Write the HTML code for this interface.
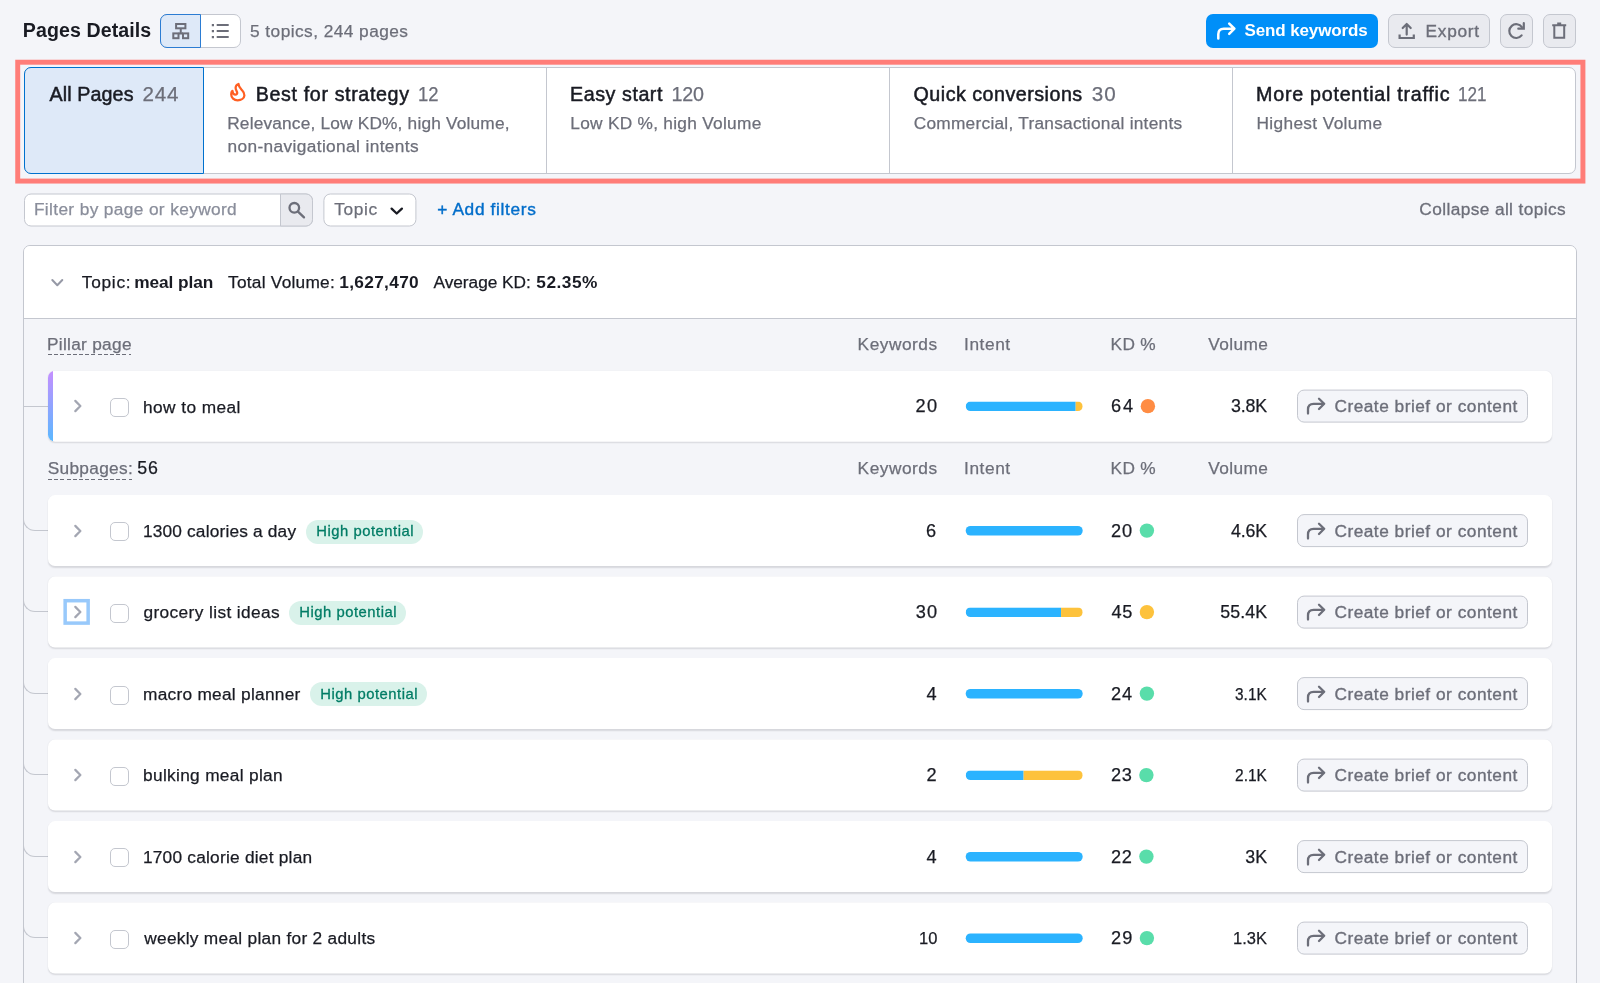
<!DOCTYPE html>
<html lang="en"><head><meta charset="utf-8"><title>Pages Details</title>
<style>
html,body{margin:0;padding:0;}
body{width:1600px;height:983px;overflow:hidden;background:#f4f5f9;font-family:"Liberation Sans", sans-serif;position:relative;}
.b{position:absolute;}
#txt{position:absolute;left:0;top:0;width:1600px;height:983px;will-change:transform;}
.t{position:absolute;white-space:pre;line-height:24px;font-family:"Liberation Sans", sans-serif;}
</style></head><body>
<div class="b" style="left:160px;top:14px;width:81px;height:34px;border:1px solid #c4c7cf;border-radius:7px;background:#fff;box-sizing:border-box;"></div>
<div class="b" style="left:160px;top:14px;width:41px;height:34px;border:1px solid #2b7cd3;border-radius:7px 0 0 7px;background:#dee9f8;box-sizing:border-box;"></div>
<svg class="b" style="left:168px;top:18px;" width="70" height="26" viewBox="168 18 70 26" fill="none" stroke-linecap="round" stroke-linejoin="round"><g stroke="#6c6e79" stroke-width="2" stroke-linecap="butt" stroke-linejoin="miter"><rect x="176.1" y="24" width="9.3" height="4.3"/><rect x="173.3" y="33.4" width="5.2" height="4.8"/><rect x="183" y="33.4" width="5.2" height="4.8"/><path d="M180.75 28.3V33.4M178.5 33.4H183"/><path d="M216.7 25.1H228.7M216.7 31.1H228.7M216.7 37.1H228.7"/><path d="M211.8 25.1H214M211.8 31.1H214M211.8 37.1H214" stroke-width="2.2"/></g></svg>
<div class="b" style="left:1206px;top:14px;width:172px;height:34px;background:#008ff8;border-radius:7px;"></div>
<svg class="b" style="left:1212px;top:18px;" width="28" height="26" viewBox="1212 18 28 26" fill="none" stroke-linecap="round" stroke-linejoin="round"><path d="M1218.3 38.4V34.2Q1218.3 28.7 1223.8 28.7H1233.8M1229.2 23.6L1234.4 28.7L1229.2 33.9" stroke="#fff" stroke-width="2.5"/></svg>
<div class="b" style="left:1388px;top:14px;width:102px;height:34px;background:#e9eaef;border:1px solid #c4c7cf;border-radius:7px;box-sizing:border-box;"></div>
<svg class="b" style="left:1394px;top:18px;" width="26" height="26" viewBox="1394 18 26 26" fill="none" stroke-linecap="round" stroke-linejoin="round"><g stroke="#6c6e79" stroke-width="2.2"><path d="M1399.6 34.4V38H1413.8V34.4" stroke-linecap="butt" stroke-linejoin="miter"/><path d="M1406.7 34.6V24.2M1402.7 28L1406.7 24L1410.7 28"/></g></svg>
<div class="b" style="left:1500px;top:14px;width:33px;height:34px;background:#e9eaef;border:1px solid #c4c7cf;border-radius:7px;box-sizing:border-box;"></div>
<svg class="b" style="left:1504px;top:18px;" width="26" height="26" viewBox="1504 18 26 26" fill="none" stroke-linecap="round" stroke-linejoin="round"><g stroke="#6c6e79" stroke-width="2.2"><path d="M1521.6 35.4A6.9 6.9 0 1 1 1521.9 27.2" /><path d="M1523.8 23.2V28.7H1518.3" stroke-linejoin="miter"/></g></svg>
<div class="b" style="left:1543px;top:14px;width:33px;height:34px;background:#e9eaef;border:1px solid #c4c7cf;border-radius:7px;box-sizing:border-box;"></div>
<svg class="b" style="left:1548px;top:18px;" width="24" height="26" viewBox="1548 18 24 26" fill="none" stroke-linecap="round" stroke-linejoin="round"><g stroke="#6c6e79" stroke-width="2" stroke-linecap="butt" stroke-linejoin="miter"><path d="M1552.2 25.3H1566.2M1557.2 23.4H1561.2"/><path d="M1554.3 25.3V37.8H1564.2V25.3"/></g></svg>
<svg class="b" style="left:12px;top:56px;" width="1578" height="132" viewBox="12 56 1578 132" fill="none" stroke-linecap="round" stroke-linejoin="round"><rect x="17.72" y="62.22" width="1565.2" height="118.85" stroke="#ff7d78" stroke-width="4.95" stroke-linejoin="miter"/></svg>
<div class="b" style="left:24px;top:67px;width:1552px;height:107px;border:1px solid #c4c7cf;border-radius:7px;background:#fff;box-sizing:border-box;"></div>
<div class="b" style="left:546px;top:68px;width:1px;height:105px;background:#c4c7cf;"></div>
<div class="b" style="left:889px;top:68px;width:1px;height:105px;background:#c4c7cf;"></div>
<div class="b" style="left:1232px;top:68px;width:1px;height:105px;background:#c4c7cf;"></div>
<div class="b" style="left:24px;top:67px;width:180px;height:107px;border:1px solid #0071ce;border-radius:7px 0 0 7px;background:#dee9f8;box-sizing:border-box;"></div>
<svg class="b" style="left:224px;top:78px;" width="28" height="28" viewBox="224 78 28 28" fill="none" stroke-linecap="round" stroke-linejoin="round"><path transform="translate(224 78)" d="M14.5 6C14.6 8.8 16.3 10.4 18.1 12.3C19.8 14.1 20.5 15.7 20.4 17.4C20.2 20.3 17.3 22.3 13.7 22.3C10 22.3 7.2 19.7 7.2 16.2C7.2 14.8 7.6 13.7 8.4 12.9C8.6 14.8 9.7 16.6 11.4 16.6C12.7 16.6 13.3 15.6 13.2 14.6C13 13.1 11.5 11.6 11.6 9.7C11.7 7.9 13 6.6 14.5 6Z" stroke="#ff5f22" stroke-width="2.25"/></svg>
<div class="b" style="left:24px;top:193px;width:289px;height:33px;transform:translate(0px,0.5px);border:1px solid #c4c7cf;border-radius:7px;background:#fff;box-sizing:border-box;"></div>
<div class="b" style="left:280px;top:193px;width:33px;height:33px;transform:translate(0px,0.5px);border:1px solid #c4c7cf;border-radius:0 7px 7px 0;background:#e9eaef;box-sizing:border-box;"></div>
<svg class="b" style="left:284px;top:198px;" width="26" height="24" viewBox="284 198 26 24" fill="none" stroke-linecap="round" stroke-linejoin="round"><g stroke="#6c6e79" stroke-width="2.3"><circle cx="294.3" cy="207.8" r="4.8"/><path d="M298 211.6L304 217.4"/></g></svg>
<div class="b" style="left:323px;top:193px;width:93px;height:33px;transform:translate(0.4px,0.5px);border:1px solid #c4c7cf;border-radius:7px;background:#fff;box-sizing:border-box;"></div>
<svg class="b" style="left:386px;top:204px;" width="22" height="14" viewBox="386 204 22 14" fill="none" stroke-linecap="round" stroke-linejoin="round"><path d="M391.6 208.6L396.7 213.5L401.9 208.6" stroke="#191b23" stroke-width="2.3"/></svg>
<div class="b" style="left:23px;top:245px;width:1554px;height:760px;border:1px solid #c4c7cf;border-radius:7px;background:#f4f5f9;box-sizing:border-box;"></div>
<div class="b" style="left:24px;top:246px;width:1552px;height:72px;background:#fff;border-radius:6px 6px 0 0;border-bottom:1px solid #c4c7cf;"></div>
<svg class="b" style="left:46px;top:274px;" width="24" height="18" viewBox="46 274 24 18" fill="none" stroke-linecap="round" stroke-linejoin="round"><path d="M52.3 280L57.3 285.2L62.3 280" stroke="#9699a6" stroke-width="2"/></svg>
<div class="b" style="left:48px;top:354px;width:83px;height:1px;background:repeating-linear-gradient(90deg,#6c6e79 0 4px,transparent 4px 6.2px);"></div>
<div class="b" style="left:48px;top:479px;width:84px;height:1px;background:repeating-linear-gradient(90deg,#6c6e79 0 4px,transparent 4px 6.2px);"></div>
<div class="b" style="left:24px;top:406px;width:24px;height:1px;background:#c4c7cf;"></div>
<div class="b" style="left:48px;top:370px;width:1504px;height:71px;transform:translate(0px,0.65px);background:#fff;border-radius:7px;box-shadow:0 1px 1.5px rgba(25,27,35,.13);overflow:hidden;"><div style="position:absolute;left:0;top:0;bottom:0;width:5px;background:linear-gradient(180deg,#c58fff,#5ab8ff)"></div></div>
<svg class="b" style="left:70px;top:396.25px;" width="16" height="20" viewBox="70 396.25 16 20" fill="none" stroke-linecap="round" stroke-linejoin="round"><path d="M75.3 401.15L80.4 406.25L75.3 411.35" stroke="#a3a6b2" stroke-width="2.2"/></svg>
<div class="b" style="left:110px;top:398px;width:19px;height:19px;border:1px solid #c4c7cf;border-radius:5px;background:#fff;box-sizing:border-box;"></div>
<svg class="b" style="left:960px;top:396px;stroke:none;" width="200" height="20" viewBox="960 396 200 20" fill="none" stroke-linecap="round" stroke-linejoin="round"><clipPath id="cp0"><rect x="965.7" y="401.50" width="117" height="9.6" rx="4.8"/></clipPath><g clip-path="url(#cp0)"><rect x="965.7" y="401.50" width="109.98" height="9.6" fill="#2bb3ff"/><rect x="1075.68" y="401.50" width="7.02" height="9.6" fill="#fdc23c"/></g><circle cx="1147.90" cy="406.15" r="7.2" fill="#ff8c43"/></svg>
<div class="b" style="left:1297px;top:389px;width:231px;height:33px;transform:translate(0px,0.6px);background:#f4f5f9;border:1px solid #c4c7cf;border-radius:7px;box-sizing:border-box;"></div>
<svg class="b" style="left:1302px;top:394.25px;" width="28" height="24" viewBox="1302 394.25 28 24" fill="none" stroke-linecap="round" stroke-linejoin="round"><path d="M1308 413.85V409.65Q1308 404.05 1313.6 404.05H1323.6M1319 398.95L1324.2 404.05L1319 409.25" stroke="#6c6e79" stroke-width="2.3"/></svg>
<div class="b" style="left:23px;top:506.70px;width:25px;height:24px;border-left:1px solid #c4c7cf;border-bottom:1px solid #c4c7cf;border-bottom-left-radius:12px;box-sizing:border-box;"></div>
<div class="b" style="left:48px;top:495px;width:1504px;height:71px;transform:translate(0px,0.1px);background:#fff;border-radius:7px;box-shadow:0 1px 1.5px rgba(25,27,35,.13);"></div>
<svg class="b" style="left:70px;top:520.7px;" width="16" height="20" viewBox="70 520.7 16 20" fill="none" stroke-linecap="round" stroke-linejoin="round"><path d="M75.3 525.60L80.4 530.70L75.3 535.80" stroke="#a3a6b2" stroke-width="2.2"/></svg>
<div class="b" style="left:110px;top:522px;width:19px;height:19px;border:1px solid #c4c7cf;border-radius:5px;background:#fff;box-sizing:border-box;"></div>
<div class="b" style="left:306px;top:520px;width:117.4px;height:24px;background:#d9f2ea;border-radius:12px;"></div>
<svg class="b" style="left:960px;top:521px;stroke:none;" width="200" height="20" viewBox="960 521 200 20" fill="none" stroke-linecap="round" stroke-linejoin="round"><rect x="965.7" y="525.95" width="117" height="9.6" rx="4.8" fill="#2bb3ff"/><circle cx="1146.90" cy="530.60" r="7.2" fill="#59ddaa"/></svg>
<div class="b" style="left:1297px;top:514px;width:231px;height:33px;transform:translate(0px,0.1px);background:#f4f5f9;border:1px solid #c4c7cf;border-radius:7px;box-sizing:border-box;"></div>
<svg class="b" style="left:1302px;top:518.7px;" width="28" height="24" viewBox="1302 518.7 28 24" fill="none" stroke-linecap="round" stroke-linejoin="round"><path d="M1308 538.30V534.10Q1308 528.50 1313.6 528.50H1323.6M1319 523.40L1324.2 528.50L1319 533.70" stroke="#6c6e79" stroke-width="2.3"/></svg>
<div class="b" style="left:23px;top:588.20px;width:25px;height:24px;border-left:1px solid #c4c7cf;border-bottom:1px solid #c4c7cf;border-bottom-left-radius:12px;box-sizing:border-box;"></div>
<div class="b" style="left:48px;top:576px;width:1504px;height:71px;transform:translate(0px,0.6px);background:#fff;border-radius:7px;box-shadow:0 1px 1.5px rgba(25,27,35,.13);"></div>
<svg class="b" style="left:60px;top:596.2px;" width="34" height="32" viewBox="60 596.2 34 32" fill="none" stroke-linecap="round" stroke-linejoin="round"><rect x="65.15" y="600.90" width="23" height="22.4" stroke="#98c9fb" stroke-width="3.5" stroke-linejoin="miter"/></svg>
<svg class="b" style="left:70px;top:602.2px;" width="16" height="20" viewBox="70 602.2 16 20" fill="none" stroke-linecap="round" stroke-linejoin="round"><path d="M75.3 607.10L80.4 612.20L75.3 617.30" stroke="#a3a6b2" stroke-width="2.2"/></svg>
<div class="b" style="left:110px;top:604px;width:19px;height:19px;border:1px solid #c4c7cf;border-radius:5px;background:#fff;box-sizing:border-box;"></div>
<div class="b" style="left:289px;top:601px;width:117.4px;height:24px;background:#d9f2ea;border-radius:12px;"></div>
<svg class="b" style="left:960px;top:602px;stroke:none;" width="200" height="20" viewBox="960 602 200 20" fill="none" stroke-linecap="round" stroke-linejoin="round"><clipPath id="cp2"><rect x="965.7" y="607.45" width="117" height="9.6" rx="4.8"/></clipPath><g clip-path="url(#cp2)"><rect x="965.7" y="607.45" width="95.36" height="9.6" fill="#2bb3ff"/><rect x="1061.06" y="607.45" width="21.64" height="9.6" fill="#fdc23c"/></g><circle cx="1146.90" cy="612.10" r="7.2" fill="#fdc23c"/></svg>
<div class="b" style="left:1297px;top:595px;width:231px;height:33px;transform:translate(0px,0.6px);background:#f4f5f9;border:1px solid #c4c7cf;border-radius:7px;box-sizing:border-box;"></div>
<svg class="b" style="left:1302px;top:600.2px;" width="28" height="24" viewBox="1302 600.2 28 24" fill="none" stroke-linecap="round" stroke-linejoin="round"><path d="M1308 619.80V615.60Q1308 610.00 1313.6 610.00H1323.6M1319 604.90L1324.2 610.00L1319 615.20" stroke="#6c6e79" stroke-width="2.3"/></svg>
<div class="b" style="left:23px;top:669.70px;width:25px;height:24px;border-left:1px solid #c4c7cf;border-bottom:1px solid #c4c7cf;border-bottom-left-radius:12px;box-sizing:border-box;"></div>
<div class="b" style="left:48px;top:658px;width:1504px;height:71px;transform:translate(0px,0.1px);background:#fff;border-radius:7px;box-shadow:0 1px 1.5px rgba(25,27,35,.13);"></div>
<svg class="b" style="left:70px;top:683.7px;" width="16" height="20" viewBox="70 683.7 16 20" fill="none" stroke-linecap="round" stroke-linejoin="round"><path d="M75.3 688.60L80.4 693.70L75.3 698.80" stroke="#a3a6b2" stroke-width="2.2"/></svg>
<div class="b" style="left:110px;top:686px;width:19px;height:19px;border:1px solid #c4c7cf;border-radius:5px;background:#fff;box-sizing:border-box;"></div>
<div class="b" style="left:310px;top:682px;width:117.4px;height:24px;background:#d9f2ea;border-radius:12px;"></div>
<svg class="b" style="left:960px;top:684px;stroke:none;" width="200" height="20" viewBox="960 684 200 20" fill="none" stroke-linecap="round" stroke-linejoin="round"><rect x="965.7" y="688.95" width="117" height="9.6" rx="4.8" fill="#2bb3ff"/><circle cx="1146.90" cy="693.60" r="7.2" fill="#59ddaa"/></svg>
<div class="b" style="left:1297px;top:677px;width:231px;height:33px;transform:translate(0px,0.1px);background:#f4f5f9;border:1px solid #c4c7cf;border-radius:7px;box-sizing:border-box;"></div>
<svg class="b" style="left:1302px;top:681.7px;" width="28" height="24" viewBox="1302 681.7 28 24" fill="none" stroke-linecap="round" stroke-linejoin="round"><path d="M1308 701.30V697.10Q1308 691.50 1313.6 691.50H1323.6M1319 686.40L1324.2 691.50L1319 696.70" stroke="#6c6e79" stroke-width="2.3"/></svg>
<div class="b" style="left:23px;top:751.20px;width:25px;height:24px;border-left:1px solid #c4c7cf;border-bottom:1px solid #c4c7cf;border-bottom-left-radius:12px;box-sizing:border-box;"></div>
<div class="b" style="left:48px;top:739px;width:1504px;height:71px;transform:translate(0px,0.6px);background:#fff;border-radius:7px;box-shadow:0 1px 1.5px rgba(25,27,35,.13);"></div>
<svg class="b" style="left:70px;top:765.2px;" width="16" height="20" viewBox="70 765.2 16 20" fill="none" stroke-linecap="round" stroke-linejoin="round"><path d="M75.3 770.10L80.4 775.20L75.3 780.30" stroke="#a3a6b2" stroke-width="2.2"/></svg>
<div class="b" style="left:110px;top:767px;width:19px;height:19px;border:1px solid #c4c7cf;border-radius:5px;background:#fff;box-sizing:border-box;"></div>
<svg class="b" style="left:960px;top:765px;stroke:none;" width="200" height="20" viewBox="960 765 200 20" fill="none" stroke-linecap="round" stroke-linejoin="round"><clipPath id="cp4"><rect x="965.7" y="770.45" width="117" height="9.6" rx="4.8"/></clipPath><g clip-path="url(#cp4)"><rect x="965.7" y="770.45" width="57.91" height="9.6" fill="#2bb3ff"/><rect x="1023.62" y="770.45" width="59.09" height="9.6" fill="#fdc23c"/></g><circle cx="1146.40" cy="775.10" r="7.2" fill="#59ddaa"/></svg>
<div class="b" style="left:1297px;top:758px;width:231px;height:33px;transform:translate(0px,0.6px);background:#f4f5f9;border:1px solid #c4c7cf;border-radius:7px;box-sizing:border-box;"></div>
<svg class="b" style="left:1302px;top:763.2px;" width="28" height="24" viewBox="1302 763.2 28 24" fill="none" stroke-linecap="round" stroke-linejoin="round"><path d="M1308 782.80V778.60Q1308 773.00 1313.6 773.00H1323.6M1319 767.90L1324.2 773.00L1319 778.20" stroke="#6c6e79" stroke-width="2.3"/></svg>
<div class="b" style="left:23px;top:832.70px;width:25px;height:24px;border-left:1px solid #c4c7cf;border-bottom:1px solid #c4c7cf;border-bottom-left-radius:12px;box-sizing:border-box;"></div>
<div class="b" style="left:48px;top:821px;width:1504px;height:71px;transform:translate(0px,0.1px);background:#fff;border-radius:7px;box-shadow:0 1px 1.5px rgba(25,27,35,.13);"></div>
<svg class="b" style="left:70px;top:846.7px;" width="16" height="20" viewBox="70 846.7 16 20" fill="none" stroke-linecap="round" stroke-linejoin="round"><path d="M75.3 851.60L80.4 856.70L75.3 861.80" stroke="#a3a6b2" stroke-width="2.2"/></svg>
<div class="b" style="left:110px;top:848px;width:19px;height:19px;border:1px solid #c4c7cf;border-radius:5px;background:#fff;box-sizing:border-box;"></div>
<svg class="b" style="left:960px;top:847px;stroke:none;" width="200" height="20" viewBox="960 847 200 20" fill="none" stroke-linecap="round" stroke-linejoin="round"><rect x="965.7" y="851.95" width="117" height="9.6" rx="4.8" fill="#2bb3ff"/><circle cx="1146.40" cy="856.60" r="7.2" fill="#59ddaa"/></svg>
<div class="b" style="left:1297px;top:840px;width:231px;height:33px;transform:translate(0px,0.1px);background:#f4f5f9;border:1px solid #c4c7cf;border-radius:7px;box-sizing:border-box;"></div>
<svg class="b" style="left:1302px;top:844.7px;" width="28" height="24" viewBox="1302 844.7 28 24" fill="none" stroke-linecap="round" stroke-linejoin="round"><path d="M1308 864.30V860.10Q1308 854.50 1313.6 854.50H1323.6M1319 849.40L1324.2 854.50L1319 859.70" stroke="#6c6e79" stroke-width="2.3"/></svg>
<div class="b" style="left:23px;top:914.20px;width:25px;height:24px;border-left:1px solid #c4c7cf;border-bottom:1px solid #c4c7cf;border-bottom-left-radius:12px;box-sizing:border-box;"></div>
<div class="b" style="left:48px;top:902px;width:1504px;height:71px;transform:translate(0px,0.6px);background:#fff;border-radius:7px;box-shadow:0 1px 1.5px rgba(25,27,35,.13);"></div>
<svg class="b" style="left:70px;top:928.2px;" width="16" height="20" viewBox="70 928.2 16 20" fill="none" stroke-linecap="round" stroke-linejoin="round"><path d="M75.3 933.10L80.4 938.20L75.3 943.30" stroke="#a3a6b2" stroke-width="2.2"/></svg>
<div class="b" style="left:110px;top:930px;width:19px;height:19px;border:1px solid #c4c7cf;border-radius:5px;background:#fff;box-sizing:border-box;"></div>
<svg class="b" style="left:960px;top:928px;stroke:none;" width="200" height="20" viewBox="960 928 200 20" fill="none" stroke-linecap="round" stroke-linejoin="round"><rect x="965.7" y="933.45" width="117" height="9.6" rx="4.8" fill="#2bb3ff"/><circle cx="1146.90" cy="938.10" r="7.2" fill="#59ddaa"/></svg>
<div class="b" style="left:1297px;top:921px;width:231px;height:33px;transform:translate(0px,0.6px);background:#f4f5f9;border:1px solid #c4c7cf;border-radius:7px;box-sizing:border-box;"></div>
<svg class="b" style="left:1302px;top:926.2px;" width="28" height="24" viewBox="1302 926.2 28 24" fill="none" stroke-linecap="round" stroke-linejoin="round"><path d="M1308 945.80V941.60Q1308 936.00 1313.6 936.00H1323.6M1319 930.90L1324.2 936.00L1319 941.20" stroke="#6c6e79" stroke-width="2.3"/></svg>
<div id="txt">
<span class="t" style="left:22.79px;top:18.21px;font-size:19.6px;letter-spacing:0.081px;color:#191b23;font-weight:700;">Pages Details</span>
<span class="t" style="left:250.01px;top:19.01px;font-size:17.3px;letter-spacing:0.452px;color:#6c6e79;-webkit-text-stroke:0.25px #6c6e79;">5 topics, 244 pages</span>
<span class="t" style="left:1244.51px;top:19.11px;font-size:17.0px;letter-spacing:-0.128px;color:#fff;font-weight:700;">Send keywords</span>
<span class="t" style="left:1425.58px;top:19.01px;font-size:17.3px;letter-spacing:0.719px;color:#6c6e79;-webkit-text-stroke:0.35px #6c6e79;">Export</span>
<span class="t" style="left:49.56px;top:81.97px;font-size:19.7px;letter-spacing:0.095px;color:#191b23;-webkit-text-stroke:0.5px #191b23;">All Pages</span>
<span class="t" style="left:142.46px;top:81.66px;font-size:20.6px;letter-spacing:0.882px;color:#6c6e79;-webkit-text-stroke:0.25px #6c6e79;">244</span>
<span class="t" style="left:255.78px;top:81.97px;font-size:19.7px;letter-spacing:0.619px;color:#191b23;-webkit-text-stroke:0.5px #191b23;">Best for strategy</span>
<span class="t" style="left:417.99px;top:81.97px;font-size:19.7px;color:#6c6e79;-webkit-text-stroke:0.25px #6c6e79;transform:scaleX(0.9374);transform-origin:0 0;">12</span>
<span class="t" style="left:570.08px;top:81.97px;font-size:19.7px;letter-spacing:0.537px;color:#191b23;-webkit-text-stroke:0.5px #191b23;">Easy start</span>
<span class="t" style="left:671.40px;top:81.97px;font-size:19.7px;letter-spacing:-0.145px;color:#6c6e79;-webkit-text-stroke:0.25px #6c6e79;">120</span>
<span class="t" style="left:913.57px;top:81.97px;font-size:19.7px;letter-spacing:0.487px;color:#191b23;-webkit-text-stroke:0.5px #191b23;">Quick conversions</span>
<span class="t" style="left:1091.72px;top:81.66px;font-size:20.6px;letter-spacing:1.167px;color:#6c6e79;-webkit-text-stroke:0.25px #6c6e79;">30</span>
<span class="t" style="left:1256.08px;top:81.97px;font-size:19.7px;letter-spacing:0.734px;color:#191b23;-webkit-text-stroke:0.5px #191b23;">More potential traffic</span>
<span class="t" style="left:1458.30px;top:81.97px;font-size:19.7px;color:#6c6e79;-webkit-text-stroke:0.25px #6c6e79;transform:scaleX(0.8685);transform-origin:0 0;">121</span>
<span class="t" style="left:227.18px;top:110.61px;font-size:17.3px;letter-spacing:0.184px;color:#6c6e79;-webkit-text-stroke:0.25px #6c6e79;">Relevance, Low KD%, high Volume,</span>
<span class="t" style="left:227.45px;top:134.21px;font-size:17.3px;letter-spacing:0.375px;color:#6c6e79;-webkit-text-stroke:0.25px #6c6e79;">non-navigational intents</span>
<span class="t" style="left:570.28px;top:110.61px;font-size:17.3px;letter-spacing:0.279px;color:#6c6e79;-webkit-text-stroke:0.25px #6c6e79;">Low KD %, high Volume</span>
<span class="t" style="left:913.72px;top:110.61px;font-size:17.3px;letter-spacing:0.253px;color:#6c6e79;-webkit-text-stroke:0.25px #6c6e79;">Commercial, Transactional intents</span>
<span class="t" style="left:1256.38px;top:110.61px;font-size:17.3px;letter-spacing:0.365px;color:#6c6e79;-webkit-text-stroke:0.25px #6c6e79;">Highest Volume</span>
<span class="t" style="left:33.88px;top:197.41px;font-size:17.3px;letter-spacing:0.367px;color:#8a8e9b;-webkit-text-stroke:0.25px #8a8e9b;">Filter by page or keyword</span>
<span class="t" style="left:334.21px;top:197.41px;font-size:17.3px;letter-spacing:0.625px;color:#6c6e79;-webkit-text-stroke:0.25px #6c6e79;">Topic</span>
<span class="t" style="left:437.16px;top:197.41px;font-size:17.3px;letter-spacing:0.662px;color:#006dca;-webkit-text-stroke:0.4px #006dca;">+ Add filters</span>
<span class="t" style="left:1419.37px;top:197.41px;font-size:17.3px;letter-spacing:0.387px;color:#6c6e79;-webkit-text-stroke:0.3px #6c6e79;">Collapse all topics</span>
<span class="t" style="left:81.86px;top:270.01px;font-size:17.3px;letter-spacing:0.712px;color:#191b23;-webkit-text-stroke:0.25px #191b23;">Topic:</span>
<span class="t" style="left:134.16px;top:270.01px;font-size:17.3px;letter-spacing:-0.076px;color:#191b23;font-weight:700;">meal plan</span>
<span class="t" style="left:228.01px;top:270.01px;font-size:17.3px;letter-spacing:0.252px;color:#191b23;-webkit-text-stroke:0.25px #191b23;">Total Volume:</span>
<span class="t" style="left:339.31px;top:270.01px;font-size:17.3px;letter-spacing:0.314px;color:#191b23;font-weight:700;">1,627,470</span>
<span class="t" style="left:433.47px;top:270.01px;font-size:17.3px;letter-spacing:-0.026px;color:#191b23;-webkit-text-stroke:0.25px #191b23;">Average KD:</span>
<span class="t" style="left:536.27px;top:270.01px;font-size:17.3px;letter-spacing:0.513px;color:#191b23;font-weight:700;">52.35%</span>
<span class="t" style="left:857.58px;top:332.01px;font-size:17.3px;letter-spacing:0.522px;color:#6c6e79;-webkit-text-stroke:0.25px #6c6e79;">Keywords</span>
<span class="t" style="left:964.10px;top:332.01px;font-size:17.3px;letter-spacing:0.555px;color:#6c6e79;-webkit-text-stroke:0.25px #6c6e79;">Intent</span>
<span class="t" style="left:1110.58px;top:332.01px;font-size:17.3px;letter-spacing:0.283px;color:#6c6e79;-webkit-text-stroke:0.25px #6c6e79;">KD %</span>
<span class="t" style="left:1208.32px;top:332.01px;font-size:17.3px;letter-spacing:0.361px;color:#6c6e79;-webkit-text-stroke:0.25px #6c6e79;">Volume</span>
<span class="t" style="left:857.58px;top:456.31px;font-size:17.3px;letter-spacing:0.522px;color:#6c6e79;-webkit-text-stroke:0.25px #6c6e79;">Keywords</span>
<span class="t" style="left:964.10px;top:456.31px;font-size:17.3px;letter-spacing:0.555px;color:#6c6e79;-webkit-text-stroke:0.25px #6c6e79;">Intent</span>
<span class="t" style="left:1110.58px;top:456.31px;font-size:17.3px;letter-spacing:0.283px;color:#6c6e79;-webkit-text-stroke:0.25px #6c6e79;">KD %</span>
<span class="t" style="left:1208.32px;top:456.31px;font-size:17.3px;letter-spacing:0.361px;color:#6c6e79;-webkit-text-stroke:0.25px #6c6e79;">Volume</span>
<span class="t" style="left:46.98px;top:332.01px;font-size:17.3px;letter-spacing:0.288px;color:#6c6e79;-webkit-text-stroke:0.25px #6c6e79;">Pillar page</span>
<span class="t" style="left:47.71px;top:456.31px;font-size:17.3px;letter-spacing:0.303px;color:#6c6e79;-webkit-text-stroke:0.25px #6c6e79;">Subpages:</span>
<span class="t" style="left:137.29px;top:456.13px;font-size:17.8px;letter-spacing:0.714px;color:#191b23;-webkit-text-stroke:0.25px #191b23;">56</span>
<span class="t" style="left:143.00px;top:394.51px;font-size:17.3px;letter-spacing:0.422px;color:#191b23;-webkit-text-stroke:0.25px #191b23;">how to meal</span>
<span class="t" style="left:915.58px;top:394.19px;font-size:18.2px;letter-spacing:1.392px;color:#191b23;-webkit-text-stroke:0.25px #191b23;">20</span>
<span class="t" style="left:1111.08px;top:394.19px;font-size:18.2px;letter-spacing:1.723px;color:#191b23;-webkit-text-stroke:0.25px #191b23;">64</span>
<span class="t" style="left:1231.02px;top:394.33px;font-size:17.8px;letter-spacing:-0.139px;color:#191b23;-webkit-text-stroke:0.25px #191b23;">3.8K</span>
<span class="t" style="left:1334.42px;top:394.36px;font-size:17.3px;letter-spacing:0.498px;color:#6c6e79;-webkit-text-stroke:0.35px #6c6e79;">Create brief or content</span>
<span class="t" style="left:142.88px;top:518.96px;font-size:17.3px;letter-spacing:0.182px;color:#191b23;-webkit-text-stroke:0.25px #191b23;">1300 calories a day</span>
<span class="t" style="left:316.19px;top:518.97px;font-size:14.8px;letter-spacing:0.531px;color:#007c65;-webkit-text-stroke:0.3px #007c65;">High potential</span>
<span class="t" style="left:926.08px;top:518.64px;font-size:18.2px;letter-spacing:0.000px;color:#191b23;-webkit-text-stroke:0.25px #191b23;">6</span>
<span class="t" style="left:1111.08px;top:518.64px;font-size:18.2px;letter-spacing:0.892px;color:#191b23;-webkit-text-stroke:0.25px #191b23;">20</span>
<span class="t" style="left:1231.09px;top:518.78px;font-size:17.8px;letter-spacing:-0.162px;color:#191b23;-webkit-text-stroke:0.25px #191b23;">4.6K</span>
<span class="t" style="left:1334.42px;top:518.81px;font-size:17.3px;letter-spacing:0.498px;color:#6c6e79;-webkit-text-stroke:0.35px #6c6e79;">Create brief or content</span>
<span class="t" style="left:143.47px;top:600.46px;font-size:17.3px;letter-spacing:0.381px;color:#191b23;-webkit-text-stroke:0.25px #191b23;">grocery list ideas</span>
<span class="t" style="left:299.19px;top:600.47px;font-size:14.8px;letter-spacing:0.531px;color:#007c65;-webkit-text-stroke:0.3px #007c65;">High potential</span>
<span class="t" style="left:915.81px;top:600.14px;font-size:18.2px;letter-spacing:1.170px;color:#191b23;-webkit-text-stroke:0.25px #191b23;">30</span>
<span class="t" style="left:1111.58px;top:600.14px;font-size:18.2px;letter-spacing:0.448px;color:#191b23;-webkit-text-stroke:0.25px #191b23;">45</span>
<span class="t" style="left:1220.29px;top:600.28px;font-size:17.8px;letter-spacing:0.111px;color:#191b23;-webkit-text-stroke:0.25px #191b23;">55.4K</span>
<span class="t" style="left:1334.42px;top:600.31px;font-size:17.3px;letter-spacing:0.498px;color:#6c6e79;-webkit-text-stroke:0.35px #6c6e79;">Create brief or content</span>
<span class="t" style="left:143.05px;top:681.96px;font-size:17.3px;letter-spacing:0.265px;color:#191b23;-webkit-text-stroke:0.25px #191b23;">macro meal planner</span>
<span class="t" style="left:320.19px;top:681.97px;font-size:14.8px;letter-spacing:0.531px;color:#007c65;-webkit-text-stroke:0.3px #007c65;">High potential</span>
<span class="t" style="left:926.58px;top:681.64px;font-size:18.2px;letter-spacing:0.000px;color:#191b23;-webkit-text-stroke:0.25px #191b23;">4</span>
<span class="t" style="left:1111.08px;top:681.64px;font-size:18.2px;letter-spacing:0.714px;color:#191b23;-webkit-text-stroke:0.25px #191b23;">24</span>
<span class="t" style="left:1235.41px;top:681.99px;font-size:17.2px;color:#191b23;-webkit-text-stroke:0.25px #191b23;transform:scaleX(0.8983);transform-origin:0 0;">3.1K</span>
<span class="t" style="left:1334.42px;top:681.81px;font-size:17.3px;letter-spacing:0.498px;color:#6c6e79;-webkit-text-stroke:0.35px #6c6e79;">Create brief or content</span>
<span class="t" style="left:143.08px;top:763.46px;font-size:17.3px;letter-spacing:0.315px;color:#191b23;-webkit-text-stroke:0.25px #191b23;">bulking meal plan</span>
<span class="t" style="left:926.58px;top:763.14px;font-size:18.2px;letter-spacing:0.000px;color:#191b23;-webkit-text-stroke:0.25px #191b23;">2</span>
<span class="t" style="left:1111.08px;top:763.14px;font-size:18.2px;letter-spacing:0.481px;color:#191b23;-webkit-text-stroke:0.25px #191b23;">23</span>
<span class="t" style="left:1235.22px;top:763.49px;font-size:17.2px;color:#191b23;-webkit-text-stroke:0.25px #191b23;transform:scaleX(0.9038);transform-origin:0 0;">2.1K</span>
<span class="t" style="left:1334.42px;top:763.31px;font-size:17.3px;letter-spacing:0.498px;color:#6c6e79;-webkit-text-stroke:0.35px #6c6e79;">Create brief or content</span>
<span class="t" style="left:142.88px;top:844.96px;font-size:17.3px;letter-spacing:0.235px;color:#191b23;-webkit-text-stroke:0.25px #191b23;">1700 calorie diet plan</span>
<span class="t" style="left:926.58px;top:844.64px;font-size:18.2px;letter-spacing:0.000px;color:#191b23;-webkit-text-stroke:0.25px #191b23;">4</span>
<span class="t" style="left:1111.08px;top:844.64px;font-size:18.2px;letter-spacing:0.596px;color:#191b23;-webkit-text-stroke:0.25px #191b23;">22</span>
<span class="t" style="left:1245.32px;top:844.78px;font-size:17.8px;letter-spacing:0.128px;color:#191b23;-webkit-text-stroke:0.25px #191b23;">3K</span>
<span class="t" style="left:1334.42px;top:844.81px;font-size:17.3px;letter-spacing:0.498px;color:#6c6e79;-webkit-text-stroke:0.35px #6c6e79;">Create brief or content</span>
<span class="t" style="left:144.23px;top:926.46px;font-size:17.3px;letter-spacing:0.287px;color:#191b23;-webkit-text-stroke:0.25px #191b23;">weekly meal plan for 2 adults</span>
<span class="t" style="left:918.74px;top:926.42px;font-size:17.4px;color:#191b23;-webkit-text-stroke:0.25px #191b23;transform:scaleX(0.9516);transform-origin:0 0;">10</span>
<span class="t" style="left:1111.08px;top:926.14px;font-size:18.2px;letter-spacing:1.043px;color:#191b23;-webkit-text-stroke:0.25px #191b23;">29</span>
<span class="t" style="left:1233.24px;top:926.49px;font-size:17.2px;color:#191b23;-webkit-text-stroke:0.25px #191b23;transform:scaleX(0.9599);transform-origin:0 0;">1.3K</span>
<span class="t" style="left:1334.42px;top:926.31px;font-size:17.3px;letter-spacing:0.498px;color:#6c6e79;-webkit-text-stroke:0.35px #6c6e79;">Create brief or content</span>
</div>
</body></html>
